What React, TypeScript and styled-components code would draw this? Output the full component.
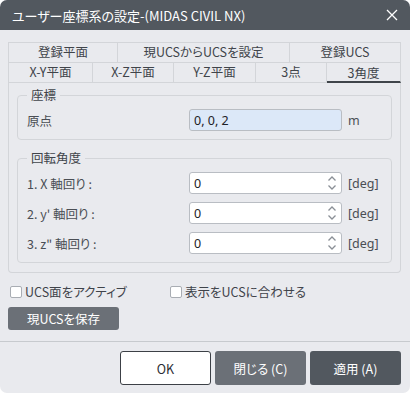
import styled, { createGlobalStyle } from "styled-components";

const GlobalStyle = createGlobalStyle`
  html, body {
    margin: 0;
    padding: 0;
    background: #ffffff;
  }
  * {
    box-sizing: border-box;
  }
`;

const topTabs = [
  { label: "登録平面" },
  { label: "現UCSからUCSを設定" },
  { label: "登録UCS" }
];

const subTabs = [
  { label: "X-Y平面" },
  { label: "X-Z平面" },
  { label: "Y-Z平面" },
  { label: "3点" },
  { label: "3角度", active: true }
];

const angleRows = [
  { label: "1. X 軸回り :", value: "0" },
  { label: "2. y' 軸回り :", value: "0" },
  { label: "3. z\" 軸回り :", value: "0" }
];

const SpinIcon = () => (
  <svg width="10" height="16" viewBox="0 0 10 16">
    <path d="M1.5 5.5 L5 2 L8.5 5.5" fill="none" stroke="#8a8f96" strokeWidth="1.3" />
    <path d="M1.5 10.5 L5 14 L8.5 10.5" fill="none" stroke="#8a8f96" strokeWidth="1.3" />
  </svg>
);

const CloseIcon = () => (
  <svg width="12" height="12" viewBox="0 0 12 12">
    <path d="M1 1 L11 11 M11 1 L1 11" stroke="#ffffff" strokeWidth="1.3" />
  </svg>
);

const App = () => {
  return (
    <>
      <GlobalStyle />
      <Dialog>
        <TitleBar>
          <span>ユーザー座標系の設定-(MIDAS CIVIL NX)</span>
          <CloseButton>
            <CloseIcon />
          </CloseButton>
        </TitleBar>
        <Body>
          <TabRow $cols="109px 172px 1fr" $top>
            {topTabs.map((t) => (
              <Tab key={t.label}>{t.label}</Tab>
            ))}
          </TabRow>
          <TabRow $cols="84px 81px 82px 71px 1fr">
            {subTabs.map((t) => (
              <Tab key={t.label} $active={t.active}>
                {t.label}
              </Tab>
            ))}
          </TabRow>
          <Panel>
            <Group>
              <Legend>座標</Legend>
              <FieldGrid>
                <FieldLabel>原点</FieldLabel>
                <TextBox $highlight>0, 0, 2</TextBox>
                <Unit>m</Unit>
              </FieldGrid>
            </Group>
            <Group $second>
              <Legend>回転角度</Legend>
              <FieldGrid>
                {angleRows.map((r) => (
                  <>
                    <FieldLabel key={r.label + "l"}>{r.label}</FieldLabel>
                    <TextBox key={r.label + "i"}>
                      {r.value}
                      <Spin>
                        <SpinIcon />
                      </Spin>
                    </TextBox>
                    <Unit key={r.label + "u"}>[deg]</Unit>
                  </>
                ))}
              </FieldGrid>
            </Group>
          </Panel>
          <CheckRow>
            <CheckItem>
              <CheckBox />
              UCS面をアクティブ
            </CheckItem>
            <CheckItem>
              <CheckBox />
              表示をUCSに合わせる
            </CheckItem>
          </CheckRow>
          <SaveButton>現UCSを保存</SaveButton>
        </Body>
        <Footer>
          <FooterButton $kind="light">OK</FooterButton>
          <FooterButton $kind="mid">閉じる (C)</FooterButton>
          <FooterButton $kind="dark">適用 (A)</FooterButton>
        </Footer>
      </Dialog>
    </>
  );
};

export default App;

const Dialog = styled.div`
  width: 410px;
  height: 393px;
  background: #e9eaee;
  border-radius: 7px;
  overflow: hidden;
  display: flex;
  flex-direction: column;
  font-family: "Noto Sans CJK JP", "Noto Sans", sans-serif;
  font-feature-settings: "palt";
  color: #3a3d42;
  font-size: 12px;
`;

const TitleBar = styled.div`
  height: 30px;
  background: #52585f;
  color: #ffffff;
  display: flex;
  align-items: center;
  justify-content: space-between;
  padding: 0 11px 0 12px;
  font-size: 13px;
`;

const CloseButton = styled.div`
  width: 14px;
  height: 14px;
  display: flex;
  align-items: center;
  justify-content: center;
`;

const Body = styled.div`
  padding: 12px 9px 0 8px;
  flex: 1;
`;

const TabRow = styled.div<{ $cols: string; $top?: boolean }>`
  display: grid;
  grid-template-columns: ${(p) => p.$cols};
  border-left: 1px solid #d3d5d9;
  border-top: ${(p) => (p.$top ? "1px solid #d3d5d9" : "none")};
  border-bottom: 1px solid #d3d5d9;
  height: ${(p) => (p.$top ? "21px" : "20px")};
`;

const Tab = styled.div<{ $active?: boolean }>`
  display: flex;
  align-items: center;
  justify-content: center;
  border-right: 1px solid #d3d5d9;
  font-size: 12.5px;
  color: #40444a;
  line-height: 1;
  padding-top: ${(p) => (p.$active ? "3px" : "0")};
  border-bottom: ${(p) => (p.$active ? "2px solid #3f444a" : "none")};
  margin-bottom: ${(p) => (p.$active ? "-1px" : "0")};
`;

const Panel = styled.div`
  height: 190px;
  border: 1px solid #d3d5d9;
  border-top: none;
  border-radius: 0 0 4px 4px;
  padding: 4px 8px 0 8px;
`;

const Group = styled.fieldset<{ $second?: boolean }>`
  margin: ${(p) => (p.$second ? "10px 0 0 0" : "0")};
  border: 1px solid #d3d5d9;
  border-radius: 4px;
  padding: 6px 9px 8px 9px;
`;

const Legend = styled.legend`
  padding: 0 4px;
  margin-left: 0;
  font-size: 12.5px;
  color: #40444a;
  line-height: 16px;
`;

const FieldGrid = styled.div`
  display: grid;
  grid-template-columns: 156px 153px auto;
  column-gap: 6px;
  row-gap: 8px;
  align-items: center;
`;

const FieldLabel = styled.div`
  font-size: 12.5px;
  color: #4a4e54;
`;

const TextBox = styled.div<{ $highlight?: boolean }>`
  position: relative;
  height: 22px;
  border: 1px solid #b9bdc3;
  border-radius: 3px;
  background: ${(p) => (p.$highlight ? "#dce8f8" : "#ffffff")};
  padding: 0 4px;
  display: flex;
  align-items: center;
  font-family: "Noto Sans", "Noto Sans CJK JP", sans-serif;
  font-size: 12.5px;
  color: #1e2126;
`;

const Spin = styled.div`
  position: absolute;
  right: 4px;
  top: 2px;
  display: flex;
`;

const Unit = styled.div`
  font-family: "Noto Sans", "Noto Sans CJK JP", sans-serif;
  font-size: 12.5px;
  color: #4a4e54;
`;

const CheckRow = styled.div`
  display: grid;
  grid-template-columns: 160px auto;
  margin: 9px 0 0 2px;
  height: 16px;
  align-items: center;
`;

const CheckItem = styled.label`
  display: flex;
  align-items: center;
  gap: 3px;
  font-size: 12.5px;
  color: #3f434a;
`;

const CheckBox = styled.span`
  width: 12px;
  height: 12px;
  background: #ffffff;
  border: 1px solid #a9adb3;
  border-radius: 2px;
`;

const SaveButton = styled.div`
  margin-top: 9px;
  width: 111px;
  height: 23px;
  background: #6b7077;
  border-radius: 3px;
  color: #ffffff;
  font-size: 12.5px;
  display: flex;
  align-items: center;
  justify-content: center;
`;

const Footer = styled.div`
  height: 52px;
  border-top: 1px solid #c7cace;
  display: flex;
  justify-content: flex-end;
  gap: 4px;
  padding: 9px 9px 0 0;
`;

const FooterButton = styled.div<{ $kind: "light" | "mid" | "dark" }>`
  width: 91px;
  height: 34px;
  border-radius: 3px;
  display: flex;
  align-items: center;
  justify-content: center;
  font-size: 12.5px;
  background: ${(p) =>
    p.$kind === "light" ? "#ffffff" : p.$kind === "mid" ? "#6b7077" : "#52585f"};
  color: ${(p) => (p.$kind === "light" ? "#2b2e33" : "#ffffff")};
  border: ${(p) => (p.$kind === "light" ? "1px solid #3c4046" : "none")};
`;
